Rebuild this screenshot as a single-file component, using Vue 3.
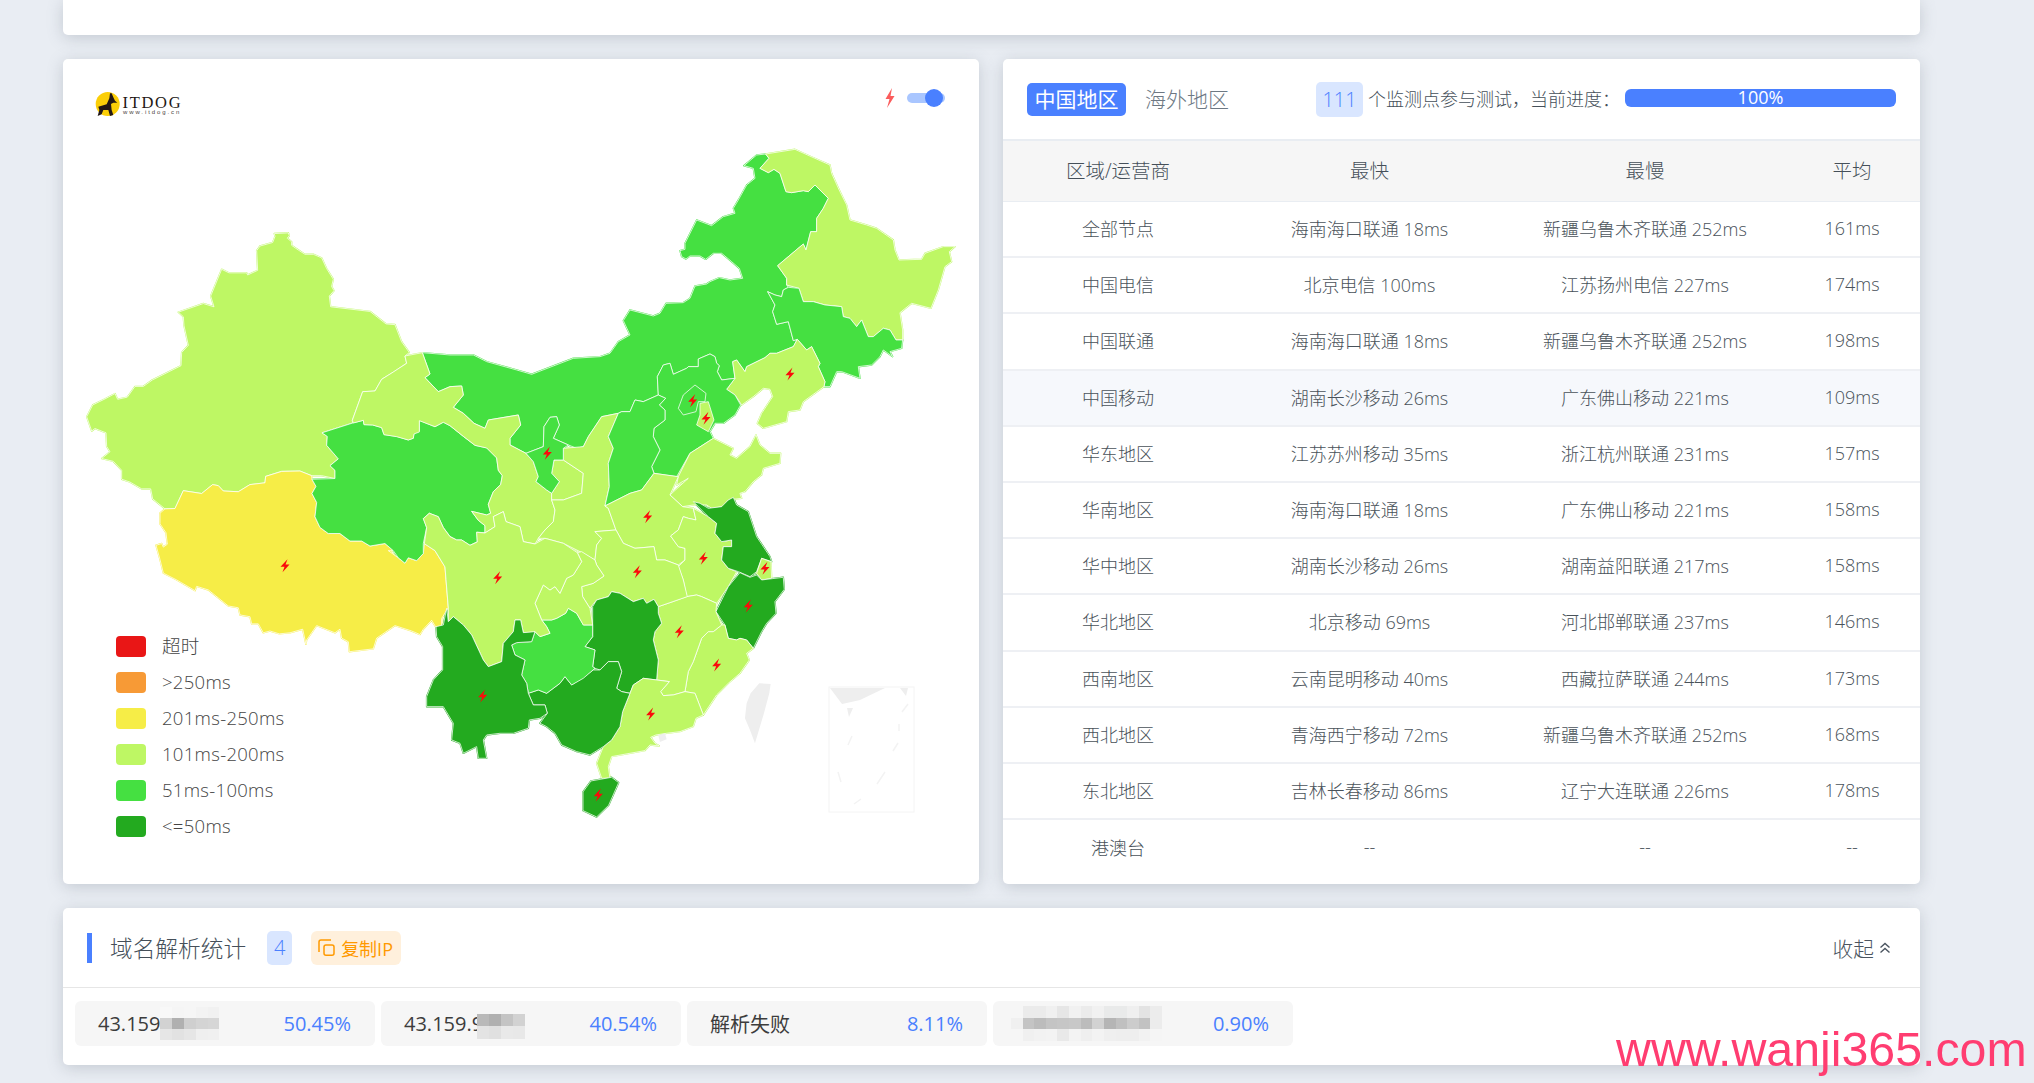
<script setup>
const L = '#bef764', M = '#45e041', D = '#23aa1f', Y = '#f6ed47'
const tWest = 'translate(80 140) scale(.3333 .3571)'
const tNorth = 'translate(600 130) scale(.3333)'
const tCenter = 'translate(400 330) scale(.3333)'

const westShapes = [
  { c: L, p: '583,262 625,260 628,268 622,275 635,285 635,295 655,308 675,320 700,320 725,330 740,360 760,390 755,410 762,422 748,437 752,467 870,480 918,515 945,517 965,565 988,595 975,605 980,625 940,650 905,670 885,703 848,705 817,785 820,792 726,820 742,830 740,855 775,893 750,912 765,925 765,948 725,940 695,940 660,927 605,928 557,942 555,960 510,965 475,985 430,983 415,968 398,965 365,990 310,982 285,1032 255,1033 218,1005 212,977 185,977 150,958 125,950 125,925 100,900 65,892 90,873 80,858 78,820 45,808 35,815 20,775 38,742 75,725 105,710 113,726 142,720 165,690 190,690 217,672 303,632 305,595 325,575 312,520 310,495 295,482 370,458 402,467 392,437 425,362 447,372 500,372 503,378 533,365 530,310 540,297 578,287 585,270' },
  { c: Y, p: '310,982 365,990 398,965 415,968 430,983 475,985 510,965 555,960 557,942 605,928 660,927 695,940 696,950 708,970 696,990 710,1015 705,1055 720,1085 745,1102 780,1102 810,1123 845,1123 870,1137 915,1130 940,1150 925,1150 955,1170 975,1185 985,1170 1010,1178 1030,1158 1033,1130 1065,1150 1095,1195 1098,1230 1105,1310 1085,1340 1085,1365 1068,1365 1055,1345 1030,1370 1020,1385 995,1375 945,1360 890,1395 880,1425 808,1433 805,1405 785,1395 780,1370 765,1380 710,1360 680,1400 678,1412 668,1370 630,1380 598,1383 570,1375 550,1380 535,1355 515,1355 510,1335 480,1330 475,1310 445,1305 385,1260 350,1250 345,1262 290,1232 250,1213 240,1175 228,1135 245,1130 250,1140 262,1132 258,1100 240,1075 240,1045 255,1033 285,1032' },
  { c: M, p: '726,820 820,792 850,785 852,797 878,798 905,805 912,825 950,830 985,840 1000,835 1002,820 1018,815 1018,785 1065,803 1090,790 1110,800 1150,830 1185,855 1220,862 1250,890 1255,925 1267,940 1262,965 1240,985 1225,1020 1232,1045 1220,1050 1175,1040 1195,1065 1215,1080 1215,1100 1190,1098 1192,1125 1170,1135 1145,1120 1130,1120 1110,1110 1090,1085 1075,1055 1048,1045 1030,1060 1040,1085 1030,1130 1030,1158 1010,1178 985,1170 975,1185 955,1170 940,1150 915,1130 870,1137 845,1123 810,1123 780,1102 745,1102 720,1085 705,1055 710,1015 696,990 708,970 696,950 765,948 765,925 750,912 775,893 740,855 742,830' }
]

const northShapes = [
  { c: M, p: '432,107 460,115 465,145 440,165 415,210 400,235 405,250 370,260 335,287 290,270 255,340 255,358 240,362 245,380 258,387 270,378 300,378 317,388 340,370 365,370 395,395 418,415 428,445 390,450 358,443 330,455 320,462 285,468 270,505 250,518 198,520 180,550 160,558 90,540 70,572 90,615 55,635 30,670 0,680 -80,685 -205,733 -250,720 -340,695 -380,675 -450,675 -533,668 -510,732 -525,743 -485,785 -450,770 -415,768 -410,795 -440,832 -410,850 -378,880 -345,895 -335,870 -245,855 -238,885 -270,925 -270,945 -222,970 -170,950 -168,890 -150,862 -130,860 -122,885 -140,925 -95,945 -70,955 -50,950 -35,920 5,860 55,850 65,845 90,845 105,810 130,815 175,795 172,740 190,705 210,700 220,733 260,715 265,710 295,710 295,687 330,672 345,680 350,700 358,707 352,725 365,750 405,745 398,695 410,690 435,725 440,710 495,683 510,670 530,670 555,660 580,650 592,628 580,632 565,575 530,583 518,545 525,525 503,485 525,495 545,500 550,480 565,472 560,465 560,445 533,407 610,342 618,360 632,305 650,305 650,265 670,235 685,205 645,165 625,185 610,182 575,188 558,185 540,130 522,118 505,128 480,115 507,85 497,72 470,75' },
  { c: L, p: '497,72 585,58 645,85 690,105 695,130 720,185 740,225 750,270 800,285 830,295 880,330 885,360 897,390 965,388 975,370 1030,350 1065,350 1048,365 1055,395 1035,410 1015,480 993,535 935,520 900,548 908,600 908,630 888,630 870,600 850,595 820,620 805,620 785,570 770,590 750,565 730,560 725,530 675,525 640,515 610,515 597,475 560,465 560,445 533,407 610,342 618,360 632,305 650,305 650,265 670,235 685,205 645,165 625,185 610,182 575,188 558,185 540,130 522,118 505,128 480,115 507,85' },
  { c: M, p: '597,475 610,515 640,515 675,525 725,530 730,560 750,565 770,590 785,570 805,620 820,620 850,595 870,600 888,630 908,630 905,655 870,665 878,680 850,660 840,680 815,705 775,710 780,745 725,725 710,725 690,770 672,770 675,755 655,710 660,700 635,650 620,660 592,628 580,632 565,575 530,583 518,545 525,525 503,485 525,495 545,500 550,480 565,472' },
  { c: L, p: '592,628 620,660 635,650 660,700 655,710 675,755 672,770 610,815 600,840 565,845 560,875 490,895 472,880 485,850 518,800 510,778 490,775 460,800 425,825 405,795 380,778 405,745 398,695 410,690 435,725 440,710 495,683 510,670 530,670 555,660 580,650' },
  { c: M, p: '175,795 172,740 190,705 210,700 220,733 260,715 265,710 295,710 295,687 330,672 345,680 350,700 358,707 352,725 365,750 405,745 380,778 405,795 422,825 405,855 370,880 345,880 330,905 340,925 270,970 230,1040 162,1030 155,1010 180,960 160,920 162,895 195,870 195,840 178,825 197,805' }
]

const centerShapes = [
  { c: L, p: '15,78 67,68 90,132 75,143 115,185 150,170 185,168 190,195 160,232 190,250 222,280 255,295 265,270 355,255 362,285 330,325 330,345 378,370 400,395 415,440 408,455 440,480 455,490 455,510 465,540 460,575 435,600 415,625 405,642 370,635 360,590 318,575 310,545 280,560 285,590 255,609 255,587 235,571 215,544 260,555 272,550 265,523 280,485 302,464 307,437 295,421 290,384 260,354 225,346 190,319 150,287 130,277 105,290 58,272 58,306 42,312 40,325 25,330 -10,320 -48,314 -55,293 -82,285 -108,284 -110,271 -140,279 -143,271 -112,185 -75,183 -55,148 -20,126 20,100' },
  { c: L, p: '462,390 490,390 550,430 545,490 490,510 455,510 455,490 478,455 455,430' },
  { c: L, p: '490,355 550,350 565,320 605,260 655,250 625,320 640,355 625,400 628,470 615,528 625,535 648,600 585,605 605,625 590,645 585,690 540,665 490,640 435,625 415,625 435,600 460,575 465,540 455,510 490,510 545,490 550,430 490,390' },
  { c: M, p: '378,370 430,350 432,290 450,262 470,260 478,285 460,325 505,345 490,355 490,390 462,390 455,430 478,455 455,490 440,480 408,455 415,440 400,395' },
  { c: M, p: '655,250 665,245 690,245 705,210 730,215 775,195 797,205 778,225 795,240 795,270 762,295 760,320 780,360 755,410 762,430 725,480 690,490 615,528 628,470 625,400 640,355 625,320' },
  { c: M, p: '850,195 885,165 918,190 915,215 895,215 888,245 850,255 835,235' },
  { c: L, p: '900,220 925,215 942,270 925,305 890,285 900,255' },
  { c: L, p: '940,325 1000,355 990,375 1010,385 1050,350 1068,315 1080,345 1110,370 1142,370 1140,400 1090,415 1085,435 1060,455 1035,485 1020,490 1025,505 985,510 970,530 935,535 920,525 880,525 848,530 810,495 865,445 830,465 835,440 870,370' },
  { c: L, p: '762,430 835,440 810,495 848,530 880,535 888,570 865,565 850,560 835,600 812,618 835,650 855,655 855,690 835,705 795,690 770,690 762,650 705,655 670,640 648,600 625,535 615,528 690,490 725,480' },
  { c: L, p: '880,535 925,560 950,580 945,610 965,635 995,630 995,650 970,650 965,690 985,715 1010,725 985,770 950,820 905,800 890,795 860,800 850,750 835,710 855,690 855,655 835,650 812,618 835,600 850,560 865,565 888,570' },
  { c: D, p: '880,515 900,520 925,535 965,530 985,510 1000,502 1010,525 1045,545 1070,620 1110,680 1115,695 1085,685 1070,725 1050,740 1015,725 985,715 965,690 970,650 995,650 995,630 965,635 945,610 950,580 925,560' },
  { c: L, p: '1085,685 1113,695 1115,745 1085,750 1070,730' },
  { c: D, p: '1020,728 1050,742 1070,735 1085,750 1150,742 1153,778 1125,815 1128,850 1100,880 1085,905 1060,955 1040,930 1020,925 1010,930 985,925 975,885 948,845 985,770' },
  { c: L, p: '965,885 975,885 985,925 1010,930 1020,925 1040,930 1060,955 1040,970 1048,990 1020,1030 985,1060 950,1095 930,1125 910,1155 885,1090 855,1085 865,1025 880,995 905,925 925,905 940,905' },
  { c: L, p: '775,830 810,818 860,800 890,795 905,800 950,820 948,845 965,885 940,905 925,905 905,925 880,995 865,1025 855,1085 820,1095 790,1097 782,1085 808,1055 770,1050 775,990 760,930 765,905 785,880 775,850' },
  { c: L, p: '590,645 605,625 585,605 648,600 670,640 705,655 762,650 770,690 795,690 835,705 850,750 862,800 810,818 775,830 762,808 740,820 730,805 700,815 660,790 635,785 625,800 590,810 570,835 548,800 545,770 580,760 612,738 590,705 585,690' },
  { c: D, p: '635,785 660,790 700,815 730,805 740,820 762,808 775,830 775,850 785,880 765,905 760,930 775,990 770,1050 730,1045 700,1065 690,1090 665,1085 650,1075 665,1025 655,995 625,995 600,1020 585,1015 578,1010 585,960 555,950 578,920 578,830 590,810 625,800' },
  { c: L, p: '700,1065 730,1045 770,1050 808,1055 782,1085 790,1097 820,1095 855,1085 885,1090 910,1155 888,1165 880,1190 840,1205 800,1210 768,1215 752,1222 765,1240 778,1248 750,1245 735,1262 690,1270 635,1280 625,1310 630,1345 605,1345 590,1300 600,1275 610,1250 635,1230 660,1190 668,1145 690,1090' },
  { c: D, p: '385,1090 415,1080 440,1090 480,1060 495,1040 515,1065 545,1045 580,1020 600,1020 625,995 655,995 665,1025 650,1075 665,1085 690,1090 668,1145 660,1190 635,1230 610,1250 570,1275 530,1265 485,1245 465,1210 440,1190 420,1180 442,1150 435,1125 400,1125' },
  { c: M, p: '425,870 455,870 470,865 497,850 505,835 530,850 550,885 578,885 578,920 555,950 585,960 578,1010 585,1015 550,1045 515,1065 495,1040 480,1060 440,1090 415,1080 385,1090 380,1060 365,1035 375,990 345,975 335,945 350,938 395,935 405,905 420,920 450,910 440,890' },
  { c: L, p: '545,770 548,800 570,835 578,885 550,885 530,850 505,835 497,850 470,865 455,870 425,870 405,820 430,765 450,780 465,770 480,790 500,745 520,735 545,695 532,668 545,665 585,690 590,705 612,738 580,760' },
  { c: L, p: '70,566 88,550 115,560 130,593 150,620 170,630 185,630 210,646 232,636 230,607 255,609 285,590 280,560 310,545 318,575 360,590 370,635 405,642 435,625 490,640 532,668 545,695 520,735 500,745 480,790 465,770 450,780 430,765 405,820 425,870 440,890 450,910 420,920 405,905 395,910 370,908 362,870 345,870 340,905 310,940 305,995 265,1010 250,990 215,915 190,885 160,860 145,875 145,834 138,748 135,711 105,662 73,641 80,593' },
  { c: D, p: '140,835 145,875 160,860 190,885 215,915 250,990 265,1010 305,995 310,940 340,905 345,870 362,870 370,908 405,905 395,935 350,938 335,945 345,975 375,990 365,1035 380,1060 385,1090 400,1125 435,1125 442,1150 420,1165 388,1170 385,1195 340,1210 300,1210 260,1215 250,1230 260,1285 235,1285 230,1250 190,1270 180,1240 155,1230 160,1180 130,1130 80,1130 80,1100 100,1050 128,1020 128,950 110,920 108,890 130,885' },
  { c: D, p: '549,1386 573,1353 635,1342 656,1358 626,1426 590,1461 549,1442' }
]

const regions = [
  ...westShapes.map(s => ({ ...s, t: tWest })),
  ...northShapes.map(s => ({ ...s, t: tNorth })),
  ...centerShapes.map(s => ({ ...s, t: tCenter }))
]

const bolts = [
  [442, 370], [878, 212], [918, 265], [1170, 132], [743, 560], [910, 685], [712, 725], [1095, 715],
  [293, 743], [1045, 828], [838, 905], [950, 1005], [248, 1098], [752, 1152], [595, 1395], [-345, 707]
]

const legend = [
  { color: '#e91616', text: '超时' },
  { color: '#f79a36', text: '>250ms' },
  { color: '#f6ed47', text: '201ms-250ms' },
  { color: '#bef764', text: '101ms-200ms' },
  { color: '#45e041', text: '51ms-100ms' },
  { color: '#23aa1f', text: '<=50ms' }
]

const rows = [
  ['全部节点', '海南海口联通 18ms', '新疆乌鲁木齐联通 252ms', '161ms'],
  ['中国电信', '北京电信 100ms', '江苏扬州电信 227ms', '174ms'],
  ['中国联通', '海南海口联通 18ms', '新疆乌鲁木齐联通 252ms', '198ms'],
  ['中国移动', '湖南长沙移动 26ms', '广东佛山移动 221ms', '109ms'],
  ['华东地区', '江苏苏州移动 35ms', '浙江杭州联通 231ms', '157ms'],
  ['华南地区', '海南海口联通 18ms', '广东佛山移动 221ms', '158ms'],
  ['华中地区', '湖南长沙移动 26ms', '湖南益阳联通 217ms', '158ms'],
  ['华北地区', '北京移动 69ms', '河北邯郸联通 237ms', '146ms'],
  ['西南地区', '云南昆明移动 40ms', '西藏拉萨联通 244ms', '173ms'],
  ['西北地区', '青海西宁移动 72ms', '新疆乌鲁木齐联通 252ms', '168ms'],
  ['东北地区', '吉林长春移动 86ms', '辽宁大连联通 226ms', '178ms'],
  ['港澳台', '--', '--', '--']
]

const chips = [
  { text: '43.159', pct: '50.45%', cols: 5, kind: 'a', cells: ['#f8f8f8','#f5f5f5','#f6f6f6','#f3f3f3','#f1f1f1','#d2d2d2','#b0b0b0','#cfcfcf','#d4d4d4','#d6d6d6','#e6e6e6','#e2e2e2','#e6e6e6','#efefef','#f0f0f0'] },
  { text: '43.159.9', pct: '40.54%', cols: 4, kind: 'b', cells: ['#b9b9b9','#b0b0b0','#c4c4c4','#d2d2d2','#e3e3e3','#e0e0e0','#e9e9e9','#e8e8e8'] },
  { text: '解析失败', pct: '8.11%', cols: 0, kind: '', cells: [] },
  { text: '', pct: '0.90%', cols: 13, kind: 'c', cells: [
    '#f6f6f6','#ebebeb','#ebebeb','#f0f0f0','#e6e6e6','#f1f1f1','#ebebeb','#f1f1f1','#e9eaea','#e9eaea','#efefef','#e3e3e3','#ececec',
    '#f0f0f0','#c4c4c4','#bcbcbc','#c4c4c4','#c6c6c6','#c8c8c8','#bcbcbc','#d2d2d2','#b5b5b5','#c0c0c0','#cccccc','#c2c2c2','#ececec',
    '#f6f6f6','#f0f0f0','#f2f2f2','#f3f3f3','#e9e9e9','#f3f3f3','#efefef','#f3f3f3','#efefef','#eeeeee','#eeeeee','#f2f2f2','#f5f5f5'
  ] }
]
</script>

<template>
  <div class="page">
    <div class="card top-card"></div>

    <div class="columns">
      <section class="card map-card">
        <svg class="map" viewBox="63 59 916 825" xmlns="http://www.w3.org/2000/svg">
          <polygon v-for="(s, i) in regions" :key="'u' + i" :points="s.p" :fill="s.c" :stroke="s.c" :transform="s.t" class="under" />
          <polygon v-for="(s, i) in regions" :key="'r' + i" :points="s.p" :fill="s.c" :transform="s.t" class="region" />
          <g :transform="tCenter">
            <polygon points="1078,1060 1112,1062 1108,1090 1092,1150 1065,1240 1050,1200 1035,1165 1040,1120 1052,1090" fill="#eeeeee" />
            <polygon points="775,1216 795,1210 800,1228 780,1236" fill="#eeeeee" />
            <path
              v-for="(b, i) in bolts"
              :key="'b' + i"
              :transform="`translate(${b[0]} ${b[1]}) scale(3)`"
              d="M2.5 -6.5 L-4.5 1.2 L-0.5 1.2 L-2.5 6.5 L4.5 -1.2 L0.5 -1.2 Z"
              fill="#fa0b0b"
            />
          </g>
          <g class="inset">
            <rect x="829" y="687" width="85" height="125" fill="none" stroke="#f4f4f4" />
            <polygon points="830,688 885,688 860,700 842,704" fill="#eeeeee" />
            <polygon points="900,688 908,688 906,696" fill="#eeeeee" />
            <polygon points="847,708 853,708 849,717" fill="#eeeeee" />
            <path d="M852 736 L848 745 M899 724 L899 731 M898 743 L893 751 M838 772 L841 782 M885 772 L877 784 M861 799 L854 804 M908 704 L902 712" stroke="#f3f3f3" stroke-width="1.5" fill="none" />
          </g>
          <g class="logo">
            <circle cx="107.7" cy="104" r="12" fill="#fbce07" />
            <polygon
              transform="translate(60 60) scale(.3333)"
              points="150,100 155,100 160,112 165,122 172,128 160,128 153,132 155,150 160,165 150,168 145,150 130,150 125,163 113,168 118,150 115,140 140,133 148,115"
              fill="#231815"
            />
            <text x="122.5" y="107.7" class="logo-main">ITDOG</text>
            <text x="123" y="114" class="logo-sub">www.itdog.cn</text>
          </g>
        </svg>

        <div class="switch-wrap">
          <svg class="switch-bolt" viewBox="0 0 10 20">
            <path d="M7 0 L0.5 11 L4.5 11 L2 20 L9.5 8 L5.5 8 Z" fill="#fb5c5c" />
          </svg>
          <div class="switch"><span class="knob"></span></div>
        </div>

        <ul class="legend">
          <li v-for="item in legend" :key="item.text" class="legend-row">
            <span class="swatch" :style="{ background: item.color }"></span>
            <span class="legend-text">{{ item.text }}</span>
          </li>
        </ul>
      </section>

      <section class="card table-card">
        <header class="table-head">
          <span class="tab active">中国地区</span>
          <span class="tab">海外地区</span>
          <span class="count">111</span>
          <span class="progress-label">个监测点参与测试，当前进度：</span>
          <div class="progress">100%</div>
        </header>
        <table class="stats">
          <colgroup>
            <col class="c1" /><col class="c2" /><col class="c3" /><col class="c4" />
          </colgroup>
          <thead>
            <tr><th>区域/运营商</th><th>最快</th><th>最慢</th><th>平均</th></tr>
          </thead>
          <tbody>
            <tr v-for="(r, i) in rows" :key="r[0]" :class="{ hovered: i === 3 }">
              <td v-for="(c, j) in r" :key="j">{{ c }}</td>
            </tr>
          </tbody>
        </table>
      </section>
    </div>

    <section class="card dns-card">
      <header class="dns-head">
        <span class="dns-bar"></span>
        <h2 class="dns-title">域名解析统计</h2>
        <span class="dns-count">4</span>
        <span class="copy">
          <svg class="copy-icon" viewBox="0 0 17 17" fill="none" stroke="#ff9900" stroke-width="1.5">
            <path d="M1 13 V3 Q1 1 3 1 H13" />
            <rect x="6" y="6" width="10" height="10.2" rx="2" />
          </svg>
          复制IP
        </span>
        <span class="collapse">
          收起
          <svg class="chev" viewBox="0 0 12 12" fill="none" stroke="#4b5560" stroke-width="1.4">
            <path d="M1.5 5.5 L6 1.5 L10.5 5.5 M1.5 10.5 L6 6.5 L10.5 10.5" />
          </svg>
        </span>
      </header>
      <div class="chips">
        <div v-for="chip in chips" :key="chip.pct" class="chip">
          <span class="chip-text">{{ chip.text }}</span>
          <span
            v-if="chip.cols"
            class="mosaic"
            :class="chip.kind"
            :style="{ gridTemplateColumns: `repeat(${chip.cols}, 1fr)` }"
          >
            <i v-for="(cell, k) in chip.cells" :key="k" :style="{ background: cell }"></i>
          </span>
          <span class="chip-pct">{{ chip.pct }}</span>
        </div>
      </div>
    </section>

    <div class="watermark">www.wanji365.com</div>
  </div>
</template>

<style>
html, body { margin: 0; background: #e9edf3; overflow: hidden; }
</style>

<style scoped>
.page {
  position: relative;
  width: 2034px;
  height: 1083px;
  box-sizing: border-box;
  padding: 0 114px 0 63px;
  background: #e9edf3;
  overflow: hidden;
  font-family: "Open Sans", "Noto Sans CJK SC", sans-serif;
  font-weight: 300;
  color: #454f59;
  display: flex;
  flex-direction: column;
}
.card {
  background: #fff;
  border-radius: 5px;
  box-shadow: 0 3px 16px rgba(100, 110, 125, .28);
}
.top-card { height: 35px; flex: none; border-radius: 0 0 5px 5px; }
.columns {
  display: flex;
  gap: 24px;
  margin-top: 24px;
  height: 825px;
  flex: none;
}
.map-card { position: relative; width: 916px; flex: none; overflow: hidden; }
.map { display: block; width: 916px; height: 825px; }
.under {
  stroke-width: 1.5px;
  vector-effect: non-scaling-stroke;
  stroke-linejoin: round;
}
.region {
  stroke: #fff;
  stroke-opacity: .75;
  stroke-width: 1px;
  vector-effect: non-scaling-stroke;
  stroke-linejoin: round;
}
.logo-main {
  font-family: "Liberation Serif", serif;
  font-size: 16.5px;
  letter-spacing: 1.7px;
  font-weight: 400;
  fill: #231815;
}
.logo-sub {
  font-family: "Liberation Sans", sans-serif;
  font-size: 6px;
  letter-spacing: 1.9px;
  font-weight: 400;
  fill: #4a4340;
}
.switch-wrap {
  position: absolute;
  top: 29px;
  left: 822px;
  display: flex;
  align-items: center;
  gap: 12px;
}
.switch-bolt { width: 10px; height: 20px; display: block; }
.switch { position: relative; width: 38px; height: 10px; border-radius: 5px; background: #a9c6ff; }
.knob {
  position: absolute;
  right: 2px;
  top: -4px;
  width: 18px;
  height: 18px;
  border-radius: 50%;
  background: #4a80ff;
}
.legend {
  position: absolute;
  left: 53px;
  top: 577px;
  margin: 0;
  padding: 0;
  list-style: none;
  display: flex;
  flex-direction: column;
  gap: 15px;
  font-size: 18.5px;
  letter-spacing: .3px;
  line-height: 21px;
  color: #454545;
}
.legend-row { display: flex; align-items: center; gap: 16px; }
.legend-text { position: relative; top: -1px; }
.swatch { width: 30px; height: 21px; border-radius: 4px; flex: none; }

.table-card { width: 917px; flex: none; overflow: hidden; }
.table-head {
  height: 82px;
  box-sizing: border-box;
  border-bottom: 2px solid #e9edf2;
  display: flex;
  align-items: center;
  padding: 0 24px;
}
.tab {
  font-size: 21px;
  line-height: 33px;
  padding: 0 8px;
  border-radius: 5px;
  color: #6d7883;
  margin-right: 11px;
}
.tab.active { padding: 0 7.5px; background: #4a80ff; color: #fff; font-weight: 400; }
.count {
  margin-left: 68px;
  width: 47px;
  height: 35px;
  line-height: 35px;
  text-align: center;
  font-size: 20px;
  border-radius: 5px;
  background: #d9e6ff;
  color: #4a80ff;
}
.progress-label {
  margin-left: 5px;
  padding-bottom: 2px;
  font-size: 18px;
  white-space: nowrap;
  color: #454f59;
}
.progress {
  margin-left: 5px;
  flex: 1;
  height: 18px;
  margin-top: -3px;
  line-height: 16px;
  border-radius: 6px;
  background: #4a80ff;
  color: #fff;
  text-align: center;
  font-size: 18px;
  font-weight: 400;
}
.stats { width: 917px; table-layout: fixed; border-collapse: collapse; font-size: 18px; }
.c1 { width: 230px; }
.c2 { width: 273px; }
.c3 { width: 278px; }
.c4 { width: 136px; }
.stats th {
  height: 60px;
  box-sizing: border-box;
  background: #f6f6f6;
  font-weight: 300;
  font-size: 19.5px;
  color: #454f59;
  padding: 0 0 3px;
  border-bottom: 1px solid #e9edf2;
}
.stats td {
  height: 56.2px;
  box-sizing: border-box;
  padding: 0 0 2px;
  text-align: center;
  border-bottom: 2px solid #eef0f4;
  color: #49525a;
}
.stats tbody tr:last-child td { border-bottom: none; }
.stats tr.hovered td { background: #f6f8fc; }

.dns-card { margin-top: 24px; height: 157px; flex: none; }
.dns-head {
  height: 80px;
  box-sizing: border-box;
  border-bottom: 1px solid #e6e6e6;
  display: flex;
  align-items: center;
  padding: 0 24px;
}
.dns-bar { width: 5px; height: 30px; background: #4a80ff; flex: none; }
.dns-title { margin: 0 0 0 18px; font-size: 22.7px; font-weight: 300; color: #454f59; }
.dns-count {
  margin-left: 21px;
  width: 25px;
  height: 34px;
  line-height: 34px;
  text-align: center;
  font-size: 20px;
  border-radius: 5px;
  background: #d9e6ff;
  color: #4a80ff;
}
.copy {
  margin-left: 19px;
  width: 90px;
  height: 34px;
  box-sizing: border-box;
  padding-left: 7px;
  display: flex;
  align-items: center;
  gap: 6px;
  font-size: 18px;
  font-weight: 400;
  border-radius: 6px;
  background: #fff0dc;
  color: #ff9900;
}
.copy-icon { width: 17px; height: 17px; flex: none; }
.collapse {
  margin-left: auto;
  margin-right: 5px;
  display: flex;
  align-items: center;
  gap: 5px;
  font-size: 20.7px;
  color: #4b5560;
}
.chev { width: 12px; height: 12px; }
.chips { display: flex; gap: 6px; padding: 13px 12px; }
.chip {
  width: 300px;
  height: 45px;
  box-sizing: border-box;
  padding: 0 24px 0 23px;
  border-radius: 6px;
  background: #f6f6f6;
  display: flex;
  align-items: center;
  font-size: 20px;
  font-weight: 400;
  color: #3c3c3c;
}
.chip-pct { margin-left: auto; color: #4a80ff; }
.mosaic { display: grid; flex: none; }
.mosaic i { display: block; }
.mosaic.a { width: 59px; height: 34px; grid-auto-rows: 1fr; }
.mosaic.b { width: 48px; height: 25px; grid-auto-rows: 1fr; margin-left: -6px; margin-top: 5px; }
.mosaic.c { width: 151px; height: 35px; grid-auto-rows: 1fr; margin-left: -5px; }
.watermark {
  position: absolute;
  left: 1616px;
  top: 1022px;
  font-family: "Liberation Sans", Arial, sans-serif;
  font-weight: 400;
  font-size: 48.3px;
  line-height: 55px;
  white-space: nowrap;
  color: #ff3d71;
}
</style>
